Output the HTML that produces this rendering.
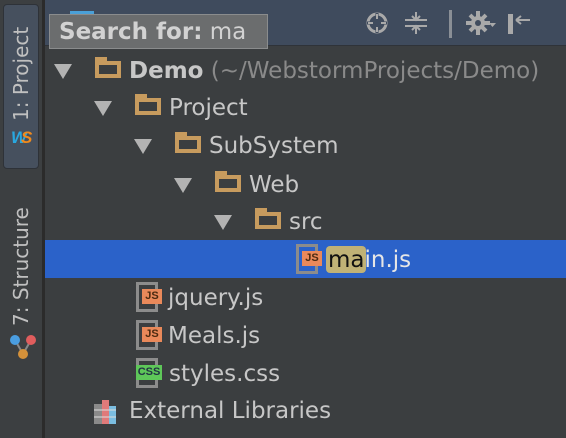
<!DOCTYPE html>
<html><head><style>
body{margin:0;width:566px;height:438px;overflow:hidden;background:#3b3e40;font-family:"DejaVu Sans","Liberation Sans",sans-serif;position:relative}
.side{position:absolute;left:0;top:0;width:42px;height:438px;background:#3c3f41;border-right:3px solid #2b2b2b}
.tab{position:absolute;left:3px;top:4px;width:36px;height:165px;background:#46505e;border:1px solid #2e3238;border-radius:4px;box-sizing:border-box}
.vt{position:absolute;transform:rotate(-90deg);transform-origin:left top;color:#c0c0c0;font-size:20px;white-space:nowrap}
.hdr{position:absolute;left:45px;top:0;right:0;height:45px;background:#3f4b5d;border-bottom:1px solid #2f3339}
.search{position:absolute;left:4px;top:14px;width:219px;height:35px;background:#6b6d6e;border:1px solid #8a8c8d;box-sizing:border-box;color:#d2d2d2;font-size:23px;line-height:35px;padding-left:9px;white-space:nowrap;overflow:hidden}
.row{position:absolute;height:38px;line-height:40px;font-size:23px;color:#c7c7c7;white-space:nowrap}
.tri{position:absolute;width:0;height:0;border-left:9px solid transparent;border-right:9px solid transparent;border-top:15px solid #b3b3b3}
.fold{position:absolute;width:26px;height:17px;border:4px solid #c79b5e;box-sizing:border-box}
.fold:before{content:"";position:absolute;left:-4px;top:-8px;width:12px;height:5px;background:#c79b5e}
.file{position:absolute;width:22px;height:30px;border:3px solid #8c8c8c;box-sizing:border-box}
.badge{position:absolute;font-family:"Liberation Sans",sans-serif;font-size:11px;font-weight:bold;line-height:15px;text-align:center;color:#4a2a10}
.js{background:#e9895a;width:20px;height:15px}
.css{background:#5ec759;width:26px;height:15px;color:#234}
</style></head><body>
<div class="side">
 <div class="tab"></div>
 <div class="vt" style="left:9px;top:121px">1: Project</div>
 <div style="position:absolute;left:11px;top:128px;font-weight:bold;font-size:17px;color:#29a8e0;font-style:italic;font-family:'Liberation Sans'">W<span style="color:#f08a1c;margin-left:-6px">S</span></div>
 <div class="vt" style="left:9px;top:326px">7: Structure</div>
 <svg style="position:absolute;left:9px;top:332px" width="28" height="28"><path d="M6 8L14 22L22 8" stroke="#888" stroke-width="2" fill="none"/><circle cx="6" cy="8" r="5" fill="#4a9de0"/><circle cx="22" cy="8" r="5" fill="#e05d5d"/><circle cx="14" cy="22" r="5" fill="#d4913a"/></svg>
</div>
<div class="hdr">
 <div style="position:absolute;left:25px;top:11px;width:24px;height:4px;background:#4aa0d8"></div>
 <svg style="position:absolute;left:320px;top:8px" width="215" height="30">
  <circle cx="12" cy="15" r="9" stroke="#a9a9a9" stroke-width="3" fill="none"/><path d="M12 5v6M12 19v6M2 15h6M16 15h6" stroke="#3f4b5d" stroke-width="3"/><path d="M12 6v5M12 19v5M3 15h5M16 15h5" stroke="#a9a9a9" stroke-width="2"/>
  <path d="M40 12h22M40 18h22M51 4v7M51 26v-7M47 8l4 4 4-4M47 22l4-4 4 4" stroke="#a9a9a9" stroke-width="2" fill="none"/>
  <rect x="84" y="2" width="3" height="28" fill="#8a8f96"/>
  <circle cx="113" cy="15" r="7" fill="#a9a9a9"/><path d="M113 3v24M101 15h24M105 7l16 16M121 7l-16 16" stroke="#a9a9a9" stroke-width="4"/><circle cx="113" cy="15" r="3" fill="#3f4b5d"/>
  <path d="M124 15h7l-3.5 4z" fill="#a9a9a9"/>
  <rect x="143" y="6" width="5" height="20" fill="#a9a9a9"/><path d="M151 12h14M151 12l5-4M151 12l5 4" stroke="#a9a9a9" stroke-width="2" fill="none"/>
 </svg>
 <div class="search"><b>Search for:</b> ma</div>
</div>
<div style="position:absolute;left:45px;top:240px;width:521px;height:38px;background:#2b62c9"></div>
<div class="tri" style="left:54px;top:64px"></div><div class="fold" style="left:95px;top:61px"></div>
<div class="row" style="left:129px;top:51px"><b>Demo</b> <span style="color:#8a8a8a">(~/WebstormProjects/Demo)</span></div>
<div class="tri" style="left:94px;top:101px"></div><div class="fold" style="left:135px;top:98px"></div>
<div class="row" style="left:169px;top:88px">Project</div>
<div class="tri" style="left:134px;top:139px"></div><div class="fold" style="left:175px;top:136px"></div>
<div class="row" style="left:209px;top:126px">SubSystem</div>
<div class="tri" style="left:174px;top:178px"></div><div class="fold" style="left:215px;top:175px"></div>
<div class="row" style="left:249px;top:165px">Web</div>
<div class="tri" style="left:214px;top:215px"></div><div class="fold" style="left:255px;top:212px"></div>
<div class="row" style="left:289px;top:202px">src</div>
<div class="file" style="left:296px;top:244px"></div><div class="badge js" style="left:302px;top:251px">JS</div>
<div style="position:absolute;left:326px;top:246px;width:40px;height:27px;background:#c0b276;border-radius:4px"></div>
<div class="row" style="left:328px;top:240px;color:#e6e6e6"><span style="color:#111">ma</span>in.js</div>
<div class="file" style="left:136px;top:282px"></div><div class="badge js" style="left:142px;top:289px">JS</div>
<div class="row" style="left:168px;top:278px">jquery.js</div>
<div class="file" style="left:136px;top:320px"></div><div class="badge js" style="left:142px;top:327px">JS</div>
<div class="row" style="left:168px;top:316px">Meals.js</div>
<div class="file" style="left:136px;top:358px"></div><div class="badge css" style="left:136px;top:365px">CSS</div>
<div class="row" style="left:169px;top:354px">styles.css</div>
<svg style="position:absolute;left:93px;top:398px" width="30" height="28"><rect x="1" y="6" width="8" height="20" fill="#8a8a8a"/><rect x="9" y="2" width="7" height="24" fill="#e07a7a"/><rect x="16" y="8" width="7" height="18" fill="#7bbde0"/><path d="M1 12h22M1 19h22" stroke="#ddd" stroke-width="1"/></svg>
<div class="row" style="left:129px;top:391px">External Libraries</div>
</body></html>
